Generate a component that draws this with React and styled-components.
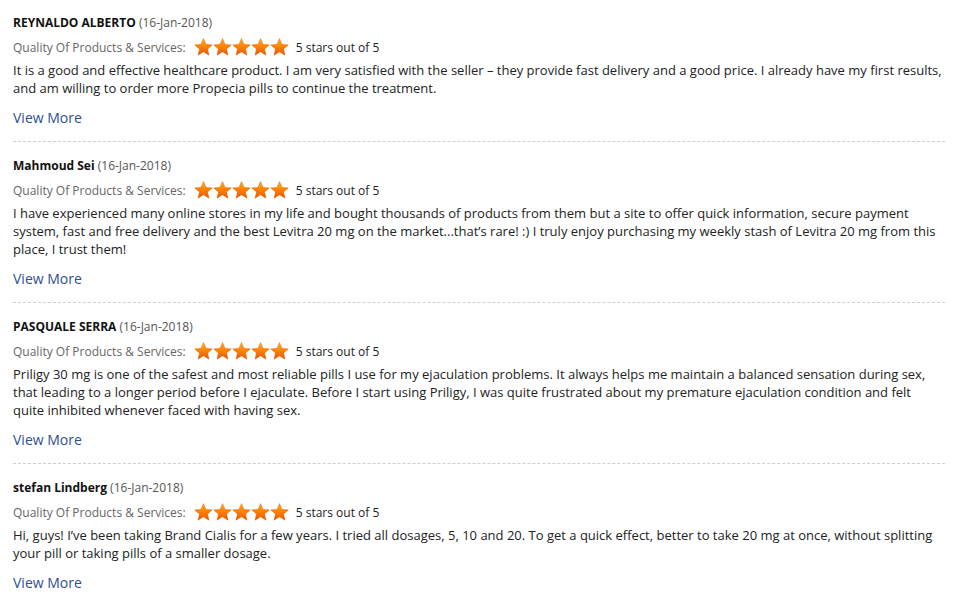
import styled, { createGlobalStyle } from "styled-components";

const GlobalStyle = createGlobalStyle`
  body {
    margin: 0;
    background: #fff;
    font-family: "Open Sans", "Liberation Sans", sans-serif;
  }
`;

const Wrapper = styled.div`
  padding: 0 19px 0 13px;
  width: 964px;
  box-sizing: border-box;
`;

const Review = styled.div`
  padding: 15px 0 13px;
  border-bottom: 1px dashed #cfcfcf;
  &:first-child {
    padding-top: 14px;
  }
  &:last-child {
    border-bottom: none;
  }
`;

const NameRow = styled.div`
  font-size: 12px;
  line-height: 18px;
  color: #555;
`;

const Name = styled.span`
  font-weight: 700;
  color: #111;
`;

const QualityRow = styled.div`
  display: flex;
  align-items: center;
  height: 22px;
  margin-top: 4px;
  font-size: 12px;
`;

const QualityLabel = styled.span`
  color: #666;
  margin-right: 8px;
`;

const Stars = styled.div`
  display: flex;
  margin-right: 7px;
`;

const StarsText = styled.span`
  color: #222;
`;

const Body = styled.p`
  margin: 3px 0 0;
  font-size: 13px;
  line-height: 18px;
  color: #222;
`;

const ViewMore = styled.a`
  display: block;
  margin-top: 11px;
  font-size: 14px;
  line-height: 20px;
  color: #2f4f8f;
  text-decoration: none;
  cursor: pointer;
`;

const Star = () => (
  <svg width="19" height="18" viewBox="0 0 24 23">
    <defs>
      <linearGradient id="sg" x1="0" y1="0" x2="0" y2="1">
        <stop offset="0" stopColor="#ffb31a" />
        <stop offset="0.55" stopColor="#ff7a00" />
        <stop offset="1" stopColor="#e85a00" />
      </linearGradient>
    </defs>
    <path
      d="M12 0.8l3.2 7.4 8 0.6-6.1 5.2 1.9 7.9L12 17.6l-7 4.3 1.9-7.9L0.8 8.8l8-0.6z"
      fill="url(#sg)"
      stroke="#d45500"
      strokeWidth="0.6"
    />
  </svg>
);

const reviews = [
  {
    name: "REYNALDO ALBERTO",
    date: "16-Jan-2018",
    text: "It is a good and effective healthcare product. I am very satisfied with the seller – they provide fast delivery and a good price. I already have my first results, and am willing to order more Propecia pills to continue the treatment.",
  },
  {
    name: "Mahmoud Sei",
    date: "16-Jan-2018",
    text: "I have experienced many online stores in my life and bought thousands of products from them but a site to offer quick information, secure payment system, fast and free delivery and the best Levitra 20 mg on the market...that’s rare! :) I truly enjoy purchasing my weekly stash of Levitra 20 mg from this place, I trust them!",
  },
  {
    name: "PASQUALE SERRA",
    date: "16-Jan-2018",
    text: "Priligy 30 mg is one of the safest and most reliable pills I use for my ejaculation problems. It always helps me maintain a balanced sensation during sex, that leading to a longer period before I ejaculate. Before I start using Priligy, I was quite frustrated about my premature ejaculation condition and felt quite inhibited whenever faced with having sex.",
  },
  {
    name: "stefan Lindberg",
    date: "16-Jan-2018",
    text: "Hi, guys! I’ve been taking Brand Cialis for a few years. I tried all dosages, 5, 10 and 20. To get a quick effect, better to take 20 mg at once, without splitting your pill or taking pills of a smaller dosage.",
  },
];

const App = () => {
  return (
    <Wrapper>
      <GlobalStyle />
      {reviews.map((r) => (
        <Review key={r.name}>
          <NameRow>
            <Name>{r.name}</Name> ({r.date})
          </NameRow>
          <QualityRow>
            <QualityLabel>Quality Of Products &amp; Services:</QualityLabel>
            <Stars>
              {[0, 1, 2, 3, 4].map((i) => (
                <Star key={i} />
              ))}
            </Stars>
            <StarsText>5 stars out of 5</StarsText>
          </QualityRow>
          <Body>{r.text}</Body>
          <ViewMore>View More</ViewMore>
        </Review>
      ))}
    </Wrapper>
  );
};

export default App;
